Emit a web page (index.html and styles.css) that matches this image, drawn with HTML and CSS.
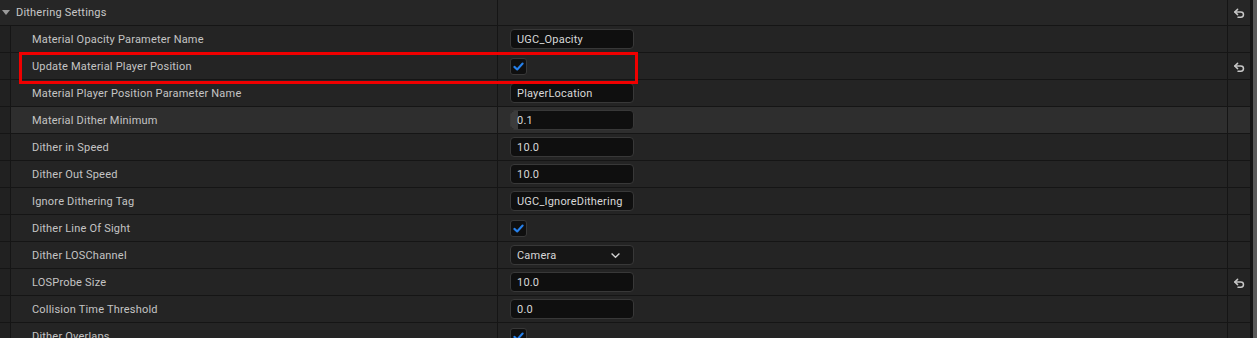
FILE: index.html
```html
<!DOCTYPE html>
<html lang="en">
<head>
    <meta charset="UTF-8">
    <meta name="viewport" content="width=device-width, initial-scale=1.0">
    <link rel="stylesheet" href="styles.css">
    <title>Dithering Settings</title>
</head>
<body>
    <div class="panel">
        <div class="details">
            <!-- category header -->
            <div class="category">
                <div class="cat-name"><span class="arrow"></span>Dithering Settings</div>
                <div class="cat-value"></div>
                <div class="reset"><svg class="reset-icon" viewBox="0 0 11 10"><path d="M4.2 1.2 L1.6 3.6 L4.2 6" /><path d="M1.8 3.6 H7.2 A2.4 2.4 0 0 1 7.2 8.4 H4.6" /></svg></div>
            </div>

            <div class="row">
                <div class="strip"></div>
                <div class="name">Material Opacity Parameter Name</div>
                <div class="value"><span class="field">UGC_Opacity</span></div>
                <div class="reset"></div>
            </div>
            <div class="row">
                <div class="strip"></div>
                <div class="name">Update Material Player Position</div>
                <div class="value"><span class="check"><svg viewBox="0 0 16 16"><path d="M3.6 8.4 L6.6 11.2 L12.4 4.8" /></svg></span></div>
                <div class="reset"><svg class="reset-icon" viewBox="0 0 11 10"><path d="M4.2 1.2 L1.6 3.6 L4.2 6" /><path d="M1.8 3.6 H7.2 A2.4 2.4 0 0 1 7.2 8.4 H4.6" /></svg></div>
            </div>
            <div class="row">
                <div class="strip"></div>
                <div class="name">Material Player Position Parameter Name</div>
                <div class="value"><span class="field">PlayerLocation</span></div>
                <div class="reset"></div>
            </div>
            <div class="row hover">
                <div class="strip"></div>
                <div class="name">Material Dither Minimum</div>
                <div class="value"><span class="field slider"><span class="fill"></span><span class="num">0.1</span></span></div>
                <div class="reset"></div>
            </div>
            <div class="row">
                <div class="strip"></div>
                <div class="name">Dither in Speed</div>
                <div class="value"><span class="field">10.0</span></div>
                <div class="reset"></div>
            </div>
            <div class="row">
                <div class="strip"></div>
                <div class="name">Dither Out Speed</div>
                <div class="value"><span class="field">10.0</span></div>
                <div class="reset"></div>
            </div>
            <div class="row">
                <div class="strip"></div>
                <div class="name">Ignore Dithering Tag</div>
                <div class="value"><span class="field">UGC_IgnoreDithering</span></div>
                <div class="reset"></div>
            </div>
            <div class="row">
                <div class="strip"></div>
                <div class="name">Dither Line Of Sight</div>
                <div class="value"><span class="check"><svg viewBox="0 0 16 16"><path d="M3.6 8.4 L6.6 11.2 L12.4 4.8" /></svg></span></div>
                <div class="reset"></div>
            </div>
            <div class="row">
                <div class="strip"></div>
                <div class="name">Dither LOSChannel</div>
                <div class="value">
                    <span class="field combo">Camera<svg class="chevron" viewBox="0 0 12 8"><path d="M1.5 1.8 L6 6 L10.5 1.8" /></svg></span>
                </div>
                <div class="reset"></div>
            </div>
            <div class="row">
                <div class="strip"></div>
                <div class="name">LOSProbe Size</div>
                <div class="value"><span class="field">10.0</span></div>
                <div class="reset"><svg class="reset-icon" viewBox="0 0 11 10"><path d="M4.2 1.2 L1.6 3.6 L4.2 6" /><path d="M1.8 3.6 H7.2 A2.4 2.4 0 0 1 7.2 8.4 H4.6" /></svg></div>
            </div>
            <div class="row">
                <div class="strip"></div>
                <div class="name">Collision Time Threshold</div>
                <div class="value"><span class="field">0.0</span></div>
                <div class="reset"></div>
            </div>
            <div class="row">
                <div class="strip"></div>
                <div class="name">Dither Overlaps</div>
                <div class="value"><span class="check"><svg viewBox="0 0 16 16"><path d="M3.6 8.4 L6.6 11.2 L12.4 4.8" /></svg></span></div>
                <div class="reset"></div>
            </div>

            <!-- annotation -->
            <div class="mark"></div>
        </div>
        <div class="scrollbar"><div class="thumb"></div></div>
    </div>
</body>
</html>
```

FILE: styles.css
```css
/* page */
html, body {
    margin: 0;
    padding: 0;
    background-color: #242424;
    overflow: hidden;
}

body {
    font-family: Roboto, "Noto Sans", sans-serif;
    font-size: 11px;
    letter-spacing: 0.2px;
    color: #c4c4c4;
}

.panel {
    display: flex;
    width: 1257px;
    height: 338px;
}

.details {
    position: relative;
    flex: 1;
}

/* header */
.category {
    display: grid;
    grid-template-columns: 498px 1fr 22px;
    height: 26px;
    border-bottom: 1px solid #151515;
    box-sizing: border-box;
    background-color: #262626;
}

.cat-name {
    display: flex;
    align-items: center;
    border-right: 1px solid #151515;
    color: #c8c8c8;
}

.arrow {
    width: 0;
    height: 0;
    margin: 0 6px 0 2px;
    border-left: 4px solid transparent;
    border-right: 4px solid transparent;
    border-top: 5px solid #9a9a9a;
}

.cat-value {
    border-right: 1px solid #151515;
}

/* rows */
.row {
    display: grid;
    grid-template-columns: 11px 487px 1fr 22px;
    height: 27px;
    border-bottom: 1px solid #151515;
    box-sizing: border-box;
}

.strip {
    background-color: #212121;
    border-right: 1px solid #151515;
}

.name {
    display: flex;
    align-items: center;
    padding-left: 21px;
    border-right: 1px solid #151515;
    white-space: nowrap;
}

.value {
    display: flex;
    align-items: center;
    padding-left: 12px;
    border-right: 1px solid #151515;
}

.reset {
    display: flex;
    align-items: center;
    justify-content: center;
}

.row.hover .name,
.row.hover .value,
.row.hover .reset {
    background-color: #2e2e2e;
}

.reset-icon {
    width: 12px;
    height: 11px;
    fill: none;
    stroke: #c8c8c8;
    stroke-width: 1.4;
    stroke-linecap: round;
    stroke-linejoin: round;
    margin: 2px 0 0 0;
}

/* widgets */
.field {
    position: relative;
    display: flex;
    align-items: center;
    box-sizing: border-box;
    min-width: 124px;
    height: 20px;
    padding: 0 6px;
    background-color: #0f0f0f;
    border: 1px solid #383838;
    border-radius: 4px;
    color: #d8d8d8;
    overflow: hidden;
}

.slider .fill {
    position: absolute;
    left: 0;
    top: 0;
    bottom: 0;
    width: 7px;
    background-color: #3c3c3c;
    border-radius: 3px 0 0 3px;
}

.slider .num {
    position: relative;
}

.combo {
    justify-content: space-between;
    background-color: #161616;
    padding-right: 12px;
}

.chevron {
    width: 11px;
    height: 7px;
    fill: none;
    stroke: #d0d0d0;
    stroke-width: 1.6;
}

.check {
    display: flex;
    align-items: center;
    justify-content: center;
    width: 17px;
    height: 17px;
    background-color: #0f0f0f;
    border: 1px solid #383838;
    border-radius: 3px;
    box-sizing: border-box;
}

.check svg {
    width: 15px;
    height: 15px;
    fill: none;
    stroke: #2680eb;
    stroke-width: 2.2;
    stroke-linecap: round;
    stroke-linejoin: round;
}

/* red annotation box */
.mark {
    position: absolute;
    left: 19px;
    top: 52px;
    width: 619px;
    height: 32px;
    box-sizing: border-box;
    border: 3px solid #f00000;
}

/* scrollbar */
.scrollbar {
    width: 7px;
    background-color: #151515;
    display: flex;
    justify-content: flex-end;
}

.thumb {
    width: 4px;
    background-color: #5a5a5a;
}
```
